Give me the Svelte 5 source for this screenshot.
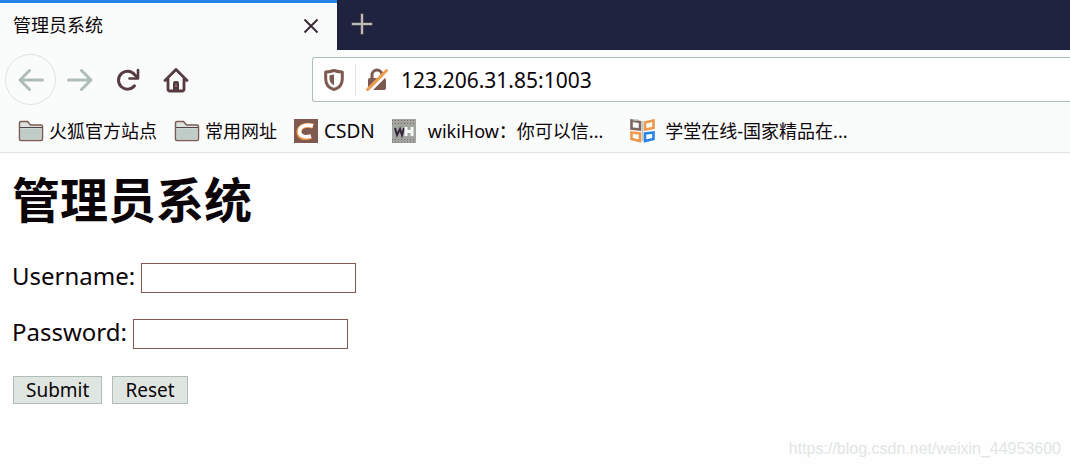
<script>
  let username = $state('');
  let password = $state('');
</script>

<div class="browser">
  <div class="tabs">
    <div class="tab">
      <span>管理员系统</span>
      <button class="icon" aria-label="Close tab">
        <svg width="16" height="16" viewBox="0 0 16 16"><path d="M1.5 1.5l13 13M14.5 1.5l-13 13" stroke="#3c2a36" stroke-width="2" fill="none" /></svg>
      </button>
    </div>
    <button class="icon add" aria-label="New tab">
      <svg width="22" height="22" viewBox="0 0 22 22"><path d="M11 .5v21M.5 11h21" stroke="#80594f" stroke-width="3" /><path d="M11 1v20M1 11h20" stroke="#b4bfba" stroke-width="2" /></svg>
    </button>
  </div>

  <nav class="toolbar">
    <button class="icon back" aria-label="Back">
      <svg width="26" height="24" viewBox="0 0 26 24"><path d="M24.5 12H3M11.500 2.500L2 12l9.500 9.500" fill="none" stroke="#afbdb8" stroke-width="3" stroke-linecap="round" stroke-linejoin="round" /></svg>
    </button>
    <button class="icon" aria-label="Forward">
      <svg width="26" height="24" viewBox="0 0 26 24"><path d="M1.500 12H23M14.500 2.500L24 12l-9.500 9.500" fill="none" stroke="#afbdb8" stroke-width="3" stroke-linecap="round" stroke-linejoin="round" /></svg>
    </button>
    <button class="icon" aria-label="Reload">
      <svg width="24" height="24" viewBox="0 0 24 24"><path d="M18.500 17.800A9 9 0 1 1 18.500 6.500L21 9" fill="none" stroke="#563b40" stroke-width="3" stroke-linecap="round" /><path d="M22 2v8.500h-8.500" fill="none" stroke="#563b40" stroke-width="2.600" stroke-linejoin="round" stroke-linecap="round" /></svg>
    </button>
    <button class="icon" aria-label="Home">
      <svg width="26" height="26" viewBox="0 0 26 26"><path d="M2 13.500L13 2.500l11 11M5 12v10q0 2 2 2h12q2 0 2-2V12" fill="none" stroke="#563b40" stroke-width="2.800" stroke-linecap="round" stroke-linejoin="round" /><path d="M10 23v-7q0-2 2-2h2q2 0 2 2v7z" fill="#563b40" /><path d="M13 17v3" stroke="#a99690" stroke-width="1" /></svg>
    </button>
    <div class="address">
      <svg class="shield" width="20" height="22" viewBox="0 0 20 22"><path d="M10 1.500C13 2.500 15.500 3 18.300 3v7c0 5-3.300 9-8.300 10.500C5 19 1.700 15 1.700 10V3C4.500 3 7 2.500 10 1.500z" fill="#fff" stroke="#7e594f" stroke-width="3" stroke-linejoin="round" /><path d="M10 5.500v10.800C7 15 5.500 12.500 5.500 9.500v-3.200z" fill="#7e594f" /></svg>
      <svg class="lock" width="24" height="24" viewBox="0 0 24 24"><path d="M7 11V7a5 5 0 0 1 10 0v4" fill="none" stroke="#7e594f" stroke-width="3" /><rect x="3" y="10" width="18" height="12" rx="2" fill="#7e594f" /><path d="M4.500 23.500L24 4" stroke="#fefefe" stroke-width="3" /><path d="M2.500 21.500L21.500 2.500" stroke="#f09c4d" stroke-width="3" stroke-linecap="round" /></svg>
      <input class="url" aria-label="Address" value="123.206.31.85:1003" />
    </div>
  </nav>

  {#snippet folder()}
    <svg width="26" height="22" viewBox="0 0 26 22"><path d="M1.500 19V3q0-1.500 1.500-1.500h6.500L12.500 5H23q1.500 0 1.500 1.500V19q0 1.500-1.500 1.500H3Q1.500 20.500 1.500 19z" fill="#dce3df" stroke="#7c5c54" stroke-width="1.500" /><path d="M3 8.500h20v11H3z" fill="#c0ccc7" /><path d="M2 7.500h22" stroke="#51434a" stroke-width="1" /></svg>
  {/snippet}

  <div class="bookmarks">
    <a href="#firefox">{@render folder()}火狐官方站点</a>
    <a href="#common">{@render folder()}常用网址</a>
    <a class="csdn" href="#csdn">
      <svg width="24" height="24" viewBox="0 0 24 24"><path fill="#80594f" d="M0 0h24v24H0z" /><path d="M19 7C11 4.500 5 8 5 13s5 7 12 4.500" fill="none" stroke="#ee984a" stroke-width="5" /><path d="M19 7C11 4.500 5.500 8 5.500 12.500s5 6.500 11.500 4.500" fill="none" stroke="#fff" stroke-width="3.500" /></svg>CSDN
    </a>
    <a class="wide" href="#wikihow">
      <svg width="24" height="24" viewBox="0 0 24 24"><path fill="#a1a49f" d="M0 0h24v24H0z" /><path d="M0 1.500h24M0 4.500h24M0 20.500h24M0 23h24" stroke="#80655d" stroke-width="1" stroke-dasharray="1 2" /><path d="M3 9l2 7 3-6 2 6 2-7" fill="none" stroke="#34263d" stroke-width="2" /><path d="M14 8v9M20 8v9M14 12.500h6" fill="none" stroke="#f4f7f4" stroke-width="3" /></svg>wikiHow：你可以信...
    </a>
    <a class="wide last" href="#xuetang">
      <svg width="26" height="24" viewBox="0 0 26 24"><g fill="none" stroke-width="2.600"><path d="M1.500 1.500l8.500 1.500v7.500L1.500 9.500z" stroke="#7e665f" /><path d="M15 3.500l8.500-2V9L15 10.500z" stroke="#ed984c" /><path d="M1.500 13.500l8.500 1V22l-8.500-2z" stroke="#ed984c" /><path d="M15 14.500l8.500-1V20L15 22z" stroke="#2783e9" /></g><path d="M3 1h5M12.500 2v20" stroke="#b7c5c0" stroke-width="1.500" /></svg>学堂在线-国家精品在...
    </a>
  </div>
</div>

<main>
  <h1>管理员系统</h1>
  <form onsubmit={(event) => event.preventDefault()}>
    <div class="field"><label for="username">Username:</label><input id="username" type="text" bind:value={username} /></div>
    <div class="field"><label for="password">Password:</label><input id="password" type="password" bind:value={password} /></div>
    <div class="actions"><button type="submit">Submit</button><button type="reset">Reset</button></div>
  </form>
</main>
<footer>https://blog.csdn.net/weixin_44953600</footer>

<style>
  :global(body) { margin: 0; background: #fefefe; }
  :global(#app) {
    min-height: 100vh;
    display: flex;
    flex-direction: column;
    color: #0c0509;
    font-family: "Noto Sans", "Noto Sans CJK SC", sans-serif;
  }
  svg { display: block; flex: none; }
  .browser { background: #fafbfb; border-bottom: 1px solid #dfe5e2; }
  .tabs { display: flex; height: 50px; background: #202340; }
  .tab {
    box-sizing: border-box;
    width: 337px;
    display: flex;
    align-items: center;
    justify-content: space-between;
    padding: 0 18px 6px 13px;
    border-top: 3px solid #2482e9;
    background: #fafbfb;
    font: 18px "Noto Sans CJK SC", sans-serif;
  }
  .tab .icon { padding-top: 5px; }
  .icon { border: 0; padding: 0; background: none; }
  .add { padding: 0 14px 2px; }
  .toolbar { display: flex; align-items: center; gap: 12px; height: 59px; padding-left: 5px; }
  .toolbar .icon { display: grid; place-items: center; width: 36px; }
  .toolbar .back {
    box-sizing: border-box;
    width: 51px;
    height: 51px;
    margin-right: -6px;
    border: 1px solid #dce3df;
    border-radius: 50%;
  }
  .address {
    box-sizing: border-box;
    flex: 1;
    display: flex;
    align-items: center;
    height: 45px;
    margin-left: 106px;
    padding-left: 11px;
    border: 1px solid #afbdb8;
    border-right: 0;
    border-radius: 3px 0 0 3px;
    background: #fefefe;
  }
  .lock { margin-left: 11px; padding: 4px 0 4px 9px; border-left: 1px solid #dfe3e1; }
  .url {
    flex: 1;
    min-width: 0;
    margin-left: 12px;
    padding: 0;
    border: 0;
    outline: 0;
    background: none;
    color: inherit;
    font: 21px "Noto Sans", sans-serif;
  }
  .bookmarks { display: flex; align-items: center; gap: 17px; height: 43px; padding-left: 18px; }
  .bookmarks a {
    display: flex;
    align-items: center;
    gap: 5px;
    color: inherit;
    font: 18px/24px "Noto Sans", "Noto Sans CJK SC", sans-serif;
    text-decoration: none;
    white-space: nowrap;
  }
  .bookmarks .csdn { gap: 6px; font-size: 19px; }
  .bookmarks .wide { gap: 12px; }
  .bookmarks .last { gap: 9px; margin-left: 10px; }
  main { flex: 1; padding: 12px 12px 16px; }
  h1 { margin: 0; font: bold 48px/64px "Noto Sans CJK SC", sans-serif; }
  form { display: grid; gap: 26px; margin-top: 34px; }
  .field { display: flex; align-items: center; gap: 6px; font-size: 24px; line-height: 26px; }
  .field label { padding-bottom: 4px; }
  .field input {
    box-sizing: border-box;
    width: 215px;
    height: 30px;
    border: 1px solid #80594f;
    background: #fefefe;
    font: 20px "Noto Sans", sans-serif;
  }
  .actions { display: flex; gap: 10px; padding: 1px; }
  .actions button {
    height: 28px;
    padding: 0 12px;
    border: 1px solid #afbdb8;
    background: #dfe5e1;
    color: inherit;
    font: 19px/26px "Noto Sans", sans-serif;
  }
  footer { padding: 0 9px 8px; text-align: right; color: #e1e6e3; font: 16px/20px "Liberation Sans", sans-serif; }
</style>
